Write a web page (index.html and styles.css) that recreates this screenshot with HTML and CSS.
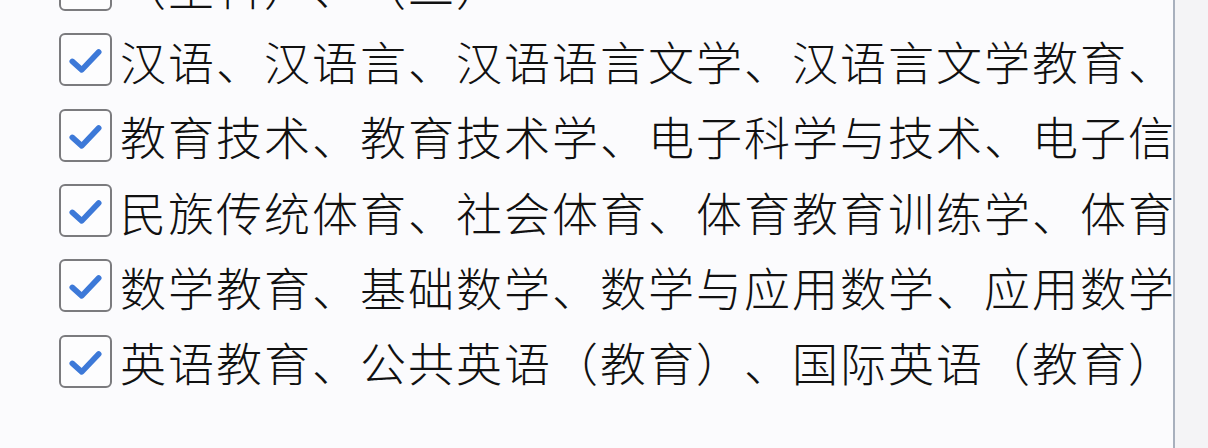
FILE: index.html
```html
<!DOCTYPE html>
<html lang="zh-CN">
<head>
<meta charset="utf-8">
<link rel="stylesheet" href="styles.css">
</head>
<body>
<div class="page">
  <div class="list">
    <div class="row partial">
      <span class="box"></span>
      <span class="label">（生科）、（二）</span>
    </div>
    <div class="row">
      <span class="box checked"><svg viewBox="0 0 52 52"><path d="M12 28 L22 37 L40 18"/></svg></span>
      <span class="label">汉语、汉语言、汉语语言文学、汉语言文学教育、汉语国际教育</span>
    </div>
    <div class="row">
      <span class="box checked"><svg viewBox="0 0 52 52"><path d="M12 28 L22 37 L40 18"/></svg></span>
      <span class="label">教育技术、教育技术学、电子科学与技术、电子信息科学与技术</span>
    </div>
    <div class="row">
      <span class="box checked"><svg viewBox="0 0 52 52"><path d="M12 28 L22 37 L40 18"/></svg></span>
      <span class="label">民族传统体育、社会体育、体育教育训练学、体育教育</span>
    </div>
    <div class="row">
      <span class="box checked"><svg viewBox="0 0 52 52"><path d="M12 28 L22 37 L40 18"/></svg></span>
      <span class="label">数学教育、基础数学、数学与应用数学、应用数学</span>
    </div>
    <div class="row">
      <span class="box checked"><svg viewBox="0 0 52 52"><path d="M12 28 L22 37 L40 18"/></svg></span>
      <span class="label">英语教育、公共英语（教育）、国际英语（教育）</span>
    </div>
  </div>
  <div class="side"></div>
</div>
</body>
</html>
```
FILE: styles.css
```css
html, body {
  margin: 0;
  padding: 0;
  width: 1208px;
  height: 448px;
  overflow: hidden;
  background: #fbfbfd;
}
.page {
  display: flex;
  width: 1208px;
  height: 448px;
}
.list {
  width: 1175px;
  flex: none;
  overflow: hidden;
  border-right: 2px solid #a8b0bd;
  display: flex;
  flex-direction: column;
  margin-top: -53px;
  padding-left: 59px;
  box-sizing: border-box;
}
.side {
  flex: 1;
  background: #f4f4f6;
}
.row {
  height: 75.3px;
  flex: none;
  display: flex;
  align-items: center;
  gap: 8px;
  white-space: nowrap;
}
.box {
  width: 53px;
  height: 53px;
  flex: none;
  box-sizing: border-box;
  border: 2px solid #7b7b7e;
  border-radius: 6px;
  background: #fdfdfe;
  display: flex;
}
.box svg {
  width: 100%;
  height: 100%;
}
.box path {
  fill: none;
  stroke: #3d79d8;
  stroke-width: 6;
  stroke-linecap: round;
  stroke-linejoin: round;
}
.label {
  font-family: "Noto Sans CJK SC", "Noto Sans", sans-serif;
  font-weight: 300;
  font-size: 46px;
  letter-spacing: 2px;
  color: #111;
  line-height: 1;
  text-spacing-trim: space-all;
  font-feature-settings: "halt" 0, "chws" 0;
}
```
